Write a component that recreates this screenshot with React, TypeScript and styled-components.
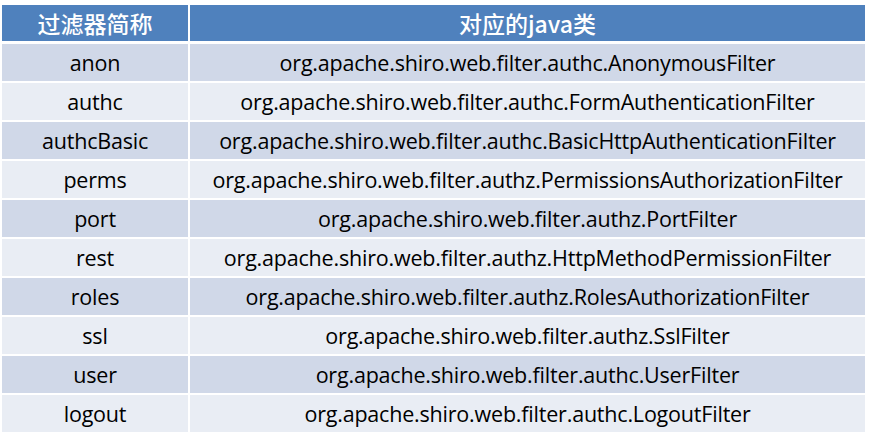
import React from 'react'
import styled, { createGlobalStyle } from 'styled-components'

const Global = createGlobalStyle`
  body { margin: 0; background: #fff; font-family: 'Open Sans', 'Noto Sans CJK SC', sans-serif; }
`

const Table = styled.div`
  margin: 5px 4px 0 2px;
  display: grid;
  grid-template-columns: 186px 1fr;
  column-gap: 2px;
  row-gap: 2px;
  width: 863px;
`

const Head = styled.div`
  background: #4f81bd;
  color: #fff;
  height: 36px;
  margin-bottom: 1px;
  display: flex;
  align-items: center;
  justify-content: center;
  font-size: 23px;
  font-weight: 500;
  font-family: 'Noto Sans CJK SC', sans-serif;
`

const Cell = styled.div<{ $odd: boolean }>`
  background: ${p => (p.$odd ? '#d0d8e8' : '#e9edf4')};
  height: 37px;
  display: flex;
  align-items: center;
  justify-content: center;
  font-size: 21.5px;
  color: #000;
  letter-spacing: -0.2px;
  white-space: nowrap;
`

const rows: [string, string][] = [
  ['anon', 'org.apache.shiro.web.filter.authc.AnonymousFilter'],
  ['authc', 'org.apache.shiro.web.filter.authc.FormAuthenticationFilter'],
  ['authcBasic', 'org.apache.shiro.web.filter.authc.BasicHttpAuthenticationFilter'],
  ['perms', 'org.apache.shiro.web.filter.authz.PermissionsAuthorizationFilter'],
  ['port', 'org.apache.shiro.web.filter.authz.PortFilter'],
  ['rest', 'org.apache.shiro.web.filter.authz.HttpMethodPermissionFilter'],
  ['roles', 'org.apache.shiro.web.filter.authz.RolesAuthorizationFilter'],
  ['ssl', 'org.apache.shiro.web.filter.authz.SslFilter'],
  ['user', 'org.apache.shiro.web.filter.authc.UserFilter'],
  ['logout', 'org.apache.shiro.web.filter.authc.LogoutFilter'],
]

export default function App() {
  return (
    <>
      <Global />
      <Table>
        <Head>过滤器简称</Head>
        <Head>对应的java类</Head>
        {rows.map(([name, cls], i) => (
          <React.Fragment key={name}>
            <Cell $odd={i % 2 === 0}>{name}</Cell>
            <Cell $odd={i % 2 === 0}>{cls}</Cell>
          </React.Fragment>
        ))}
      </Table>
    </>
  )
}
